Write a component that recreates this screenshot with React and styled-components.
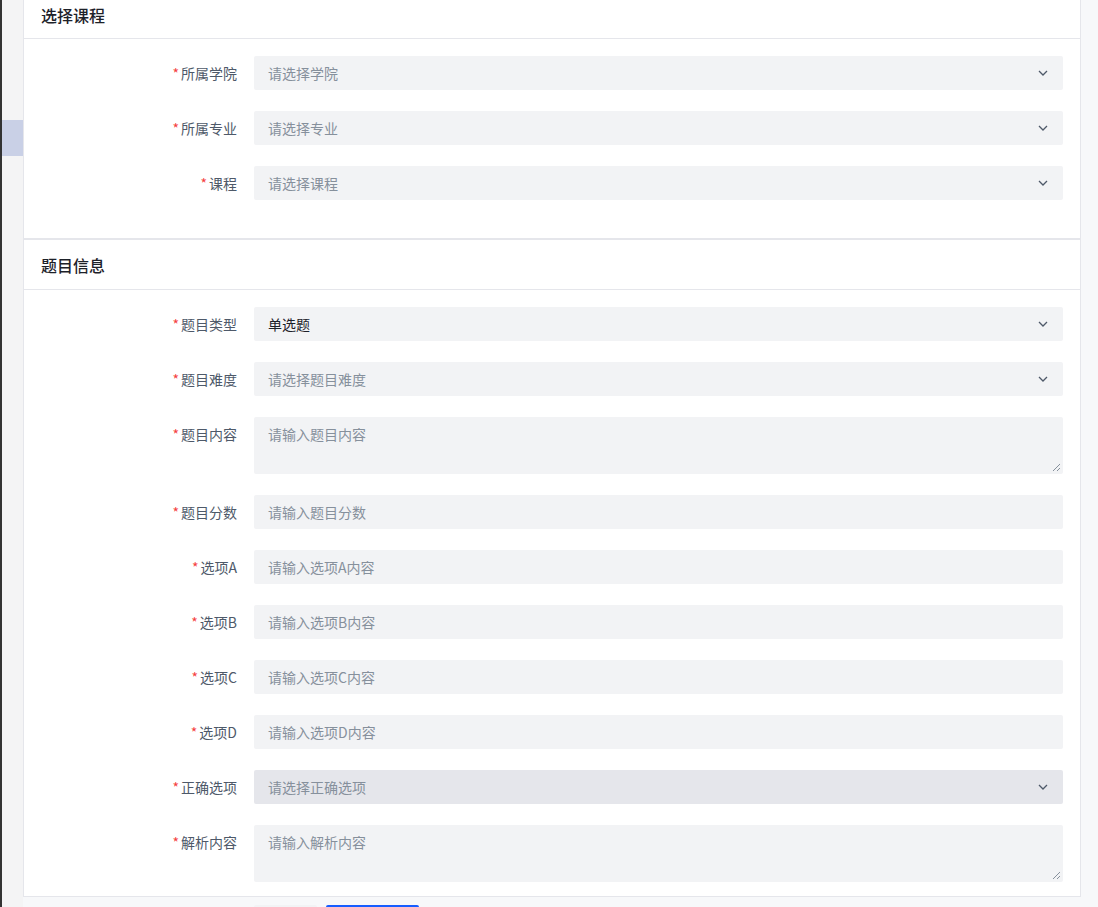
import styled, { createGlobalStyle } from "styled-components"

const Global = createGlobalStyle`
  body { margin: 0; background: #f7f8fa; font-family: "Noto Sans CJK SC", "Noto Sans", sans-serif; }
`

const Page = styled.div`
  display: flex;
  height: 907px;
  overflow: hidden;
`

const Side = styled.div`
  width: 23px;
  flex-shrink: 0;
  background: linear-gradient(to bottom, #f4f4f5 0, #f4f4f5 120px, #c9d0e6 120px, #c9d0e6 156px, #f4f4f5 156px);
  border-left: 2px solid #333;
  box-sizing: border-box;
`

const Main = styled.div`
  width: 1058px;
  display: flex;
  flex-direction: column;
`

const Card = styled.div`
  background: #fff;
  border: 1px solid #e5e6eb;
  border-top: ${({ $first }) => ($first ? "none" : "1px solid #e5e6eb")};
`

const Header = styled.div`
  height: ${({ $first }) => ($first ? "39px" : "50px")};
  display: flex;
  align-items: ${({ $first }) => ($first ? "flex-start" : "center")};
  padding: ${({ $first }) => ($first ? "3px 17px 0" : "0 17px")};
  box-sizing: border-box;
  border-bottom: 1px solid #e5e6eb;
  font-size: 16px;
  font-weight: 500;
  color: #1d2129;
`

const Body = styled.div`
  padding: 17px 17px ${({ $pad }) => $pad || "38px"} 0;
  display: flex;
  flex-direction: column;
  gap: 21px;
`

const Row = styled.div`
  display: flex;
  align-items: flex-start;
`

const Label = styled.div`
  width: 213px;
  padding-right: 17px;
  text-align: right;
  font-size: 14px;
  line-height: 34px;
  color: #4e5969;
  & > span { color: #f53f3f; margin-right: 2px; }
`

const Field = styled.div`
  flex: 1;
  height: ${({ $tall }) => ($tall ? "57px" : "34px")};
  background: ${({ $dark }) => ($dark ? "#e5e6eb" : "#f2f3f5")};
  border-radius: 2px;
  display: flex;
  align-items: ${({ $tall }) => ($tall ? "flex-start" : "center")};
  padding: ${({ $tall }) => ($tall ? "7px 14px" : "0 14px")};
  box-sizing: border-box;
  position: relative;
  font-size: 14px;
  color: ${({ $value }) => ($value ? "#1d2129" : "#86909c")};
`

const Text = styled.div`flex: 1;`

const Grip = styled.svg`
  position: absolute;
  right: 2px;
  bottom: 2px;
`

const Buttons = styled.div`
  display: flex;
  gap: 9px;
  padding: 8px 0 0 231px;
`

const Btn = styled.div`
  width: ${({ $w }) => $w};
  height: 32px;
  border-radius: 2px;
  background: ${({ $primary }) => ($primary ? "#165dff" : "#f2f3f5")};
`

const Chevron = () => (
  <svg width="12" height="12" viewBox="0 0 12 12">
    <path d="M2 4l4 4 4-4" fill="none" stroke="#4e5969" strokeWidth="1.3" />
  </svg>
)

const Item = ({ label, text, select, tall, value, dark }) => (
  <Row>
    <Label><span>*</span>{label}</Label>
    <Field $tall={tall} $value={value} $dark={dark}>
      <Text>{text}</Text>
      {select && <Chevron />}
      {tall && (
        <Grip width="9" height="9" viewBox="0 0 9 9">
          <path d="M8 1L1 8M8 5L5 8" stroke="#86909c" strokeWidth="1" />
        </Grip>
      )}
    </Field>
  </Row>
)

export default function App() {
  return (
    <>
      <Global />
      <Page>
        <Side />
        <Main>
          <Card $first>
            <Header $first>选择课程</Header>
            <Body>
              <Item label="所属学院" text="请选择学院" select />
              <Item label="所属专业" text="请选择专业" select />
              <Item label="课程" text="请选择课程" select />
            </Body>
          </Card>
          <Card>
            <Header>题目信息</Header>
            <Body $pad="14px">
              <Item label="题目类型" text="单选题" select value />
              <Item label="题目难度" text="请选择题目难度" select />
              <Item label="题目内容" text="请输入题目内容" tall />
              <Item label="题目分数" text="请输入题目分数" />
              <Item label="选项A" text="请输入选项A内容" />
              <Item label="选项B" text="请输入选项B内容" />
              <Item label="选项C" text="请输入选项C内容" />
              <Item label="选项D" text="请输入选项D内容" />
              <Item label="正确选项" text="请选择正确选项" select dark />
              <Item label="解析内容" text="请输入解析内容" tall />
            </Body>
          </Card>
          <Buttons>
            <Btn $w="63px" />
            <Btn $w="93px" $primary />
          </Buttons>
        </Main>
      </Page>
    </>
  )
}
